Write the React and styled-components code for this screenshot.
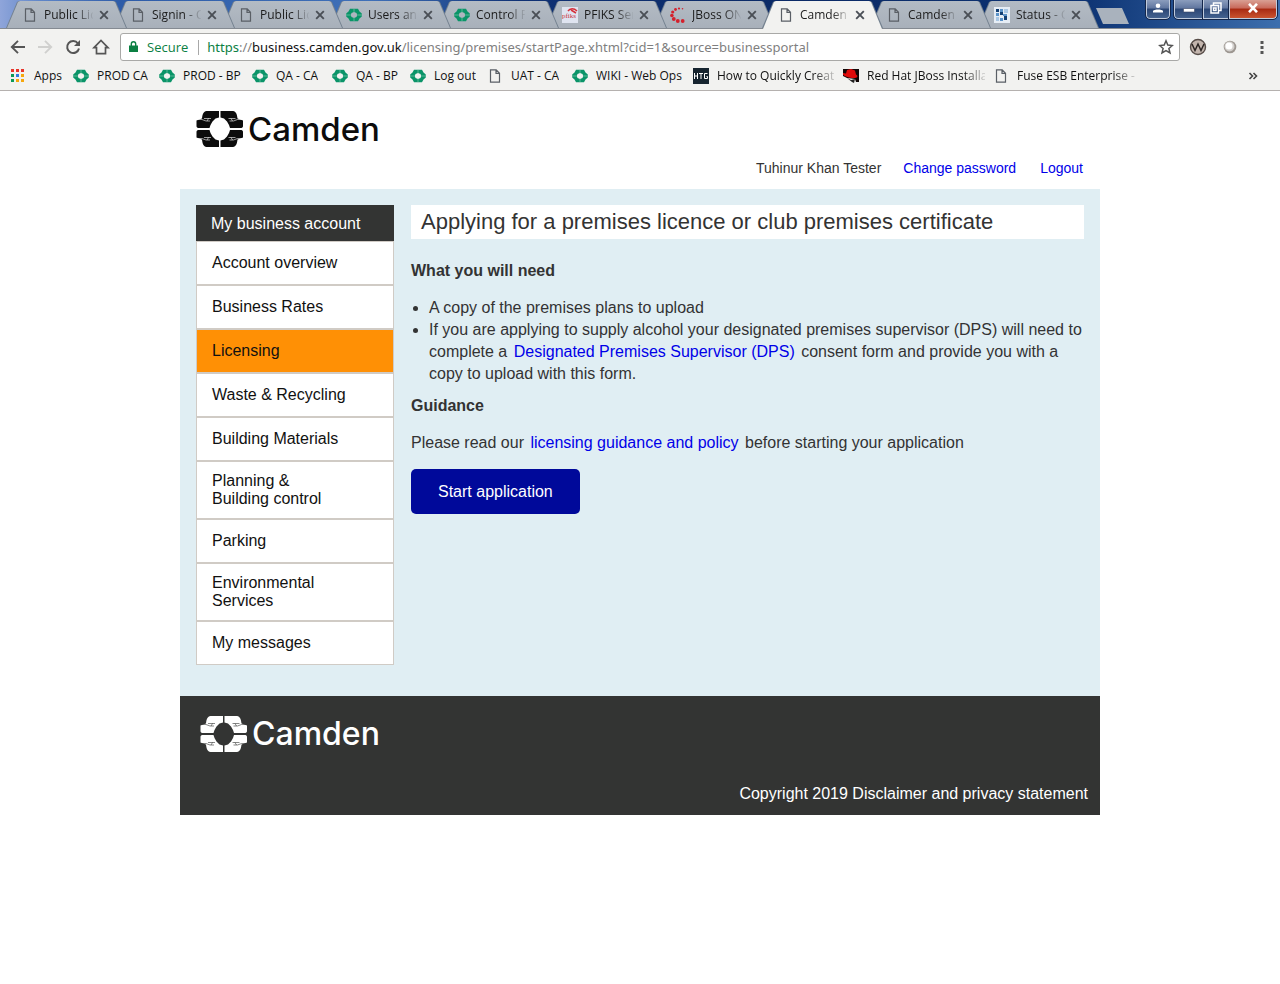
import React from "react";
import styled, { createGlobalStyle, css } from "styled-components";

const GlobalStyle = createGlobalStyle`
  * {
    box-sizing: border-box;
  }
  body {
    margin: 0;
    background: #fff;
    color: #333;
    font-family: "Liberation Sans", Arial, sans-serif;
    font-size: 16px;
    line-height: 22px;
  }
  button,
  input {
    font-family: inherit;
    margin: 0;
  }
`;

/* ---------- browser frame ---------- */

const Chrome = styled.header`
  font-family: "Open Sans", "Segoe UI", sans-serif;
  font-size: 12px;
  line-height: 16px;
  color: #111;
  background: #f2f2f0;
  border-bottom: 1px solid #b5b1af;
`;

const TabStrip = styled.div`
  display: flex;
  height: 29px;
  padding-left: 6px;
  border-bottom: 1px solid #848a92;
  background: linear-gradient(
    90deg,
    #8fa5da 0,
    #5f86c8 40px,
    #2e5ca8 120px,
    #3f70b8 370px,
    #0f3174 520px,
    #0b2a66 800px,
    #0c3272 1080px,
    #3d6fae 1280px
  );
`;

const TabBox = styled.div`
  position: relative;
  z-index: ${(props) => props.$level};
  display: flex;
  align-items: center;
  flex: 0 0 121px;
  height: 28px;
  margin-right: -13px;
  padding: 2px 16px 0;
  color: #1c1c1c;

  &::before,
  &::after {
    content: "";
    position: absolute;
    z-index: -1;
    inset: 0;
    clip-path: polygon(0 100%, 11px 2px, 13px 1px, 108px 1px, 110px 2px, 100% 100%);
    background: #73808f;
  }
  &::after {
    inset: 1px 1px 0;
    clip-path: polygon(0 100%, 11px 1px, 13px 0, 106px 0, 108px 1px, 100% 100%);
    background: linear-gradient(#b3bbc4, #a8b0ba);
    ${(props) =>
      props.$active &&
      css`
        bottom: -1px;
        background: #f2f2f0;
      `}
  }
`;

const TabTitle = styled.span`
  flex: 0 0 49px;
  margin: 0 6px;
  overflow: hidden;
  white-space: nowrap;
  mask-image: linear-gradient(90deg, #000 32px, transparent 50px);
`;

const IconButton = styled.button`
  display: flex;
  align-items: center;
  justify-content: center;
  flex: none;
  width: ${(props) => props.$size || 16}px;
  height: ${(props) => props.$size || 16}px;
  padding: 0;
  border: 0;
  background: none;
`;

const MoreButton = styled(IconButton)`
  margin-left: auto;
`;

const NewTab = styled.button`
  width: 33px;
  height: 16px;
  margin: 8px auto 0 10px;
  padding: 0;
  border: 0;
  background: #a9b2bd;
  clip-path: polygon(0 0, 26px 0, 100% 100%, 7px 100%);
`;

const WindowControls = styled.div`
  display: flex;
  height: 19px;
  margin-right: 3px;
`;

const WindowButton = styled.button`
  display: flex;
  align-items: center;
  justify-content: center;
  width: ${(props) => props.$width}px;
  margin-right: ${(props) => props.$gap || 0}px;
  padding: 0 0 2px;
  border: 1px solid #c0cbdc;
  border-top: 0;
  border-radius: ${(props) => props.$radius || "0"};
  outline: 1px solid #14264a;
  background: ${(props) =>
    props.$close
      ? "linear-gradient(#d9a094 0, #c8695a 45%, #a82a12 50%, #c9532f 100%)"
      : "linear-gradient(#8b9dbd 0, #60769f 45%, #2b4675 50%, #44628f 100%)"};
`;

const Toolbar = styled.div`
  display: flex;
  align-items: center;
  height: 36px;
  padding: 0 8px 0 9px;
  gap: 8px;
`;

const AddressBar = styled.form`
  display: flex;
  align-items: center;
  flex: 1;
  height: 28px;
  margin-left: 1px;
  padding: 0 5px 0 8px;
  border: 1px solid #a9a9a7;
  border-radius: 3px;
  background: #fff;
  font-size: 13px;
  line-height: 18px;
`;

const Secure = styled.span`
  margin-left: 9px;
  padding-right: 10px;
  border-right: 1px solid #a8a8a8;
  line-height: 15px;
  color: #0b8043;
`;

const Url = styled.span`
  flex: 1;
  margin-left: 8px;
  color: #7f7f7f;
  font-family: "Noto Sans", "Open Sans", sans-serif;
  white-space: nowrap;

  b {
    font-weight: 400;
    color: #111;
  }
  i {
    font-style: normal;
    color: #0b8043;
  }
`;

const Bookmarks = styled.nav`
  display: flex;
  align-items: center;
  height: 25px;
  padding: 0 19px 3px 10px;
`;

const Bookmark = styled.a`
  display: flex;
  align-items: center;
  flex: 0 0 ${(props) => props.$width}px;
  gap: 8px;
  color: #111;
  text-decoration: none;
  white-space: nowrap;

  span:last-child {
    max-width: 118px;
    overflow: hidden;
    ${(props) =>
      props.$fade &&
      css`
        mask-image: linear-gradient(90deg, #000 96px, transparent 122px);
      `}
  }
`;

const PageIcon = () => (
  <svg width="14" height="14" viewBox="0 0 14 14" fill="none" stroke="#5a5f66" strokeWidth="1.2">
    <path d="M2.5.8h5.700l3.300 3.400v9h-9zM8 .8v3.600h3.500" />
  </svg>
);

const CamdenIcon = () => (
  <svg width="16" height="14" viewBox="0 0 16 14">
    <path
      fill="#0a9468"
      fillRule="evenodd"
      d="M4 .800h8l1.500 2.700L15.800 5.500v3l-2.300 2-1.500 2.700H4l-1.500-2.700-2.300-2v-3l2.300-2zM8 4 5.500 5 4.800 7l.7 2 2.500 1 2.500-1 .7-2-.7-2z"
    />
    <path stroke="#8fcdb7" strokeWidth=".6" d="M8 .8V4M8 10v3.200M.2 7h4.600M11.200 7h4.600" />
  </svg>
);

const PfiksIcon = () => (
  <svg width="16" height="16" viewBox="0 0 16 16">
    <path fill="#dfe4f0" d="M0 0h16v16H0z" />
    <path fill="none" stroke="#d6303a" strokeWidth="1.500" d="M6 4c2-3 6-3 9 0M9 3l5 3" />
    <text x="0" y="11" fontSize="7" fontFamily="Liberation Serif, serif" fill="#c9323c">
      pfiks
    </text>
  </svg>
);

const JBossIcon = () => (
  <svg width="16" height="16" viewBox="0 0 16 16" fill="#d4202c">
    <circle cx="12.500" cy="1.800" r=".8" />
    <circle cx="9" cy="1.500" r="1.100" />
    <circle cx="5.500" cy="2.500" r="1.400" />
    <circle cx="2.700" cy="5" r="1.600" />
    <circle cx="1.900" cy="8.500" r="1.800" />
    <circle cx="3.800" cy="12" r="1.900" />
    <circle cx="7.800" cy="14" r="1.900" />
    <circle cx="12.700" cy="14" r="1.900" />
  </svg>
);

const StatusIcon = () => (
  <svg width="16" height="16" viewBox="0 0 16 16">
    <path fill="#e6edf5" d="M0 0h16v16H0z" />
    <path fill="#123f73" d="M2 2h3v3H2zM6 5h3v3H6zM10 9h3v4h-3z" />
    <path fill="#5b93c9" d="M6 2h3v3H6zM2 6h3v3H2zM9 7h4v2H9zM6 11h3v3H6z" />
    <path fill="#a9c7e4" d="M10 2h4v4h-4zM2 10h3v4H2z" />
  </svg>
);

const HatIcon = () => (
  <svg width="16" height="16" viewBox="0 0 16 16">
    <path fill="#100606" d="M0 1h16v13h-3l-1-3-8-1-4-2z" />
    <path fill="#e00b0b" d="M0 5c1 0 2 .5 3 .5L4 2l4-1 4 1.500 1 4c2 1 2 3-1 3.500-4 .5-10-1-12-3.500z" />
    <path fill="#222" d="m4 10 4 2 4-1-1 4-2-1z" />
  </svg>
);

const HtgIcon = () => (
  <svg width="16" height="16" viewBox="0 0 16 16">
    <path fill="#16242f" d="M0 0h16v16H0z" />
    <path fill="none" stroke="#fff" d="M1.500 5v6M4.500 5v6M2 8h2M6 5.500h4M8 5v6M14.500 5.500h-3v5h3v-2h-1" />
  </svg>
);

const AppsIcon = () => (
  <svg width="16" height="14" viewBox="0 0 16 14">
    <path fill="#e8352b" d="M1 0h3v3H1zM6 0h3v3H6zM11 0h3v3h-3z" />
    <path fill="#0b9a57" d="M1 5h3v3H1zM1 10h3v3H1z" />
    <path fill="#2f7de1" d="M6 5h3v3H6z" />
    <path fill="#f6a70c" d="M11 5h3v3h-3zM6 10h3v3H6zM11 10h3v3h-3z" />
  </svg>
);

const CloseIcon = () => (
  <svg width="10" height="10" viewBox="0 0 10 10" stroke="#4a4f56" strokeWidth="1.900">
    <path d="m1.200 1.200 7.600 7.600M8.800 1.200 1.200 8.800" />
  </svg>
);

const icons = {
  page: <PageIcon />,
  camden: <CamdenIcon />,
  pfiks: <PfiksIcon />,
  jboss: <JBossIcon />,
  status: <StatusIcon />,
  hat: <HatIcon />,
  htg: <HtgIcon />,
  apps: <AppsIcon />,
};

const IconSlot = styled.span`
  display: flex;
  justify-content: center;
  flex: 0 0 16px;
`;

const tabs = [
  { icon: "page", title: "Public Lice" },
  { icon: "page", title: "Signin - Ca" },
  { icon: "page", title: "Public Lice" },
  { icon: "camden", title: "Users and" },
  { icon: "camden", title: "Control Pa" },
  { icon: "pfiks", title: "PFIKS Serv" },
  { icon: "jboss", title: "JBoss ON" },
  { icon: "page", title: "Camden", active: true },
  { icon: "page", title: "Camden" },
  { icon: "status", title: "Status - C" },
];

const bookmarks = [
  { icon: "apps", title: "Apps", width: 63 },
  { icon: "camden", title: "PROD CA", width: 86 },
  { icon: "camden", title: "PROD - BP", width: 93 },
  { icon: "camden", title: "QA - CA", width: 80 },
  { icon: "camden", title: "QA - BP", width: 78 },
  { icon: "camden", title: "Log out", width: 77 },
  { icon: "page", title: "UAT - CA", width: 85 },
  { icon: "camden", title: "WIKI - Web Ops", width: 121 },
  { icon: "htg", title: "How to Quickly Creat", width: 150, fade: true },
  { icon: "hat", title: "Red Hat JBoss Installa", width: 150, fade: true },
  { icon: "page", title: "Fuse ESB Enterprise -", width: 150, fade: true },
];

const Browser = () => (
  <Chrome>
    <TabStrip>
      {tabs.map((tab, i) => (
        <TabBox key={i} $active={tab.active} $level={tab.active ? 20 : 10 - i}>
          <IconSlot>{icons[tab.icon]}</IconSlot>
          <TabTitle>{tab.title}</TabTitle>
          <IconButton $size={10} aria-label="Close tab">
            <CloseIcon />
          </IconButton>
        </TabBox>
      ))}
      <NewTab aria-label="New tab" />
      <WindowControls>
        <WindowButton $width={24} $gap={4} $radius="0 0 4px 4px" aria-label="Profile">
          <svg width="10" height="10" viewBox="0 0 10 10" fill="#fff">
            <circle cx="5" cy="2.800" r="2.300" />
            <path d="M0 9.500V8c1-2 9-2 10 0v1.500z" />
          </svg>
        </WindowButton>
        <WindowButton $width={29} $radius="0 0 0 4px" aria-label="Minimize">
          <svg width="12" height="12" viewBox="0 0 12 12">
            <path fill="#fff" stroke="#3a4766" strokeWidth=".6" d="M.5 6.500h11v3.500H.5z" />
          </svg>
        </WindowButton>
        <WindowButton $width={26} aria-label="Restore">
          <svg width="12" height="12" viewBox="0 0 12 12" fill="none" stroke="#fff" strokeWidth="1.500">
            <path d="M3.500 3V1h7.500v7.500H9M1 3.500h7.500V11H1zM3.500 6h2.500v2.500H3.500z" />
          </svg>
        </WindowButton>
        <WindowButton $width={48} $close $radius="0 0 4px 0" aria-label="Close">
          <svg width="12" height="10" viewBox="0 0 12 10" stroke="#fff" strokeWidth="2.600">
            <path d="m2 .8 8 8.400M10 .8 2 9.200" />
          </svg>
        </WindowButton>
      </WindowControls>
    </TabStrip>
    <Toolbar>
      <IconButton $size={18} aria-label="Back">
        <svg width="16" height="16" viewBox="0 0 16 16" fill="none" stroke="#555" strokeWidth="1.900">
          <path d="M15 8H2.500M8 1.800 1.800 8 8 14.200" />
        </svg>
      </IconButton>
      <IconButton $size={20} aria-label="Forward">
        <svg width="16" height="16" viewBox="0 0 16 16" fill="none" stroke="#d0d0ce" strokeWidth="1.900">
          <path d="M1 8h12.500M8 1.800 14.200 8 8 14.200" />
        </svg>
      </IconButton>
      <IconButton $size={20} aria-label="Reload">
        <svg width="16" height="16" viewBox="0 0 16 16">
          <path fill="none" stroke="#555" strokeWidth="2" d="M13 4.500A6 6 0 1 0 14 9.500" />
          <path fill="#555" d="M15 1v6H9z" />
        </svg>
      </IconButton>
      <IconButton $size={20} aria-label="Home">
        <svg width="18" height="16" viewBox="0 0 18 16" fill="none" stroke="#555" strokeWidth="1.700">
          <path d="M2 8.700 9 1.500l7 7.200h-2.500v6h-9v-6z" />
        </svg>
      </IconButton>
      <AddressBar>
        <svg width="9" height="12" viewBox="0 0 9 12">
          <path fill="#0b8043" d="M0 4.500h9V11H0z" />
          <path fill="none" stroke="#0b8043" strokeWidth="1.400" d="M2.300 5V3a2.200 2.200 0 0 1 4.400 0v2" />
        </svg>
        <Secure>Secure</Secure>
        <Url>
          <i>https</i>://<b>business.camden.gov.uk</b>
          /licensing/premises/startPage.xhtml?cid=1&amp;source=businessportal
        </Url>
        <IconButton aria-label="Bookmark this page">
          <svg width="16" height="16" viewBox="0 0 16 16" fill="none" stroke="#555" strokeWidth="1.500">
            <path d="m8 1.800 1.800 4.300 4.600.4-3.500 3 1.100 4.500L8 11.600 4 14l1.100-4.500-3.500-3 4.600-.4z" />
          </svg>
        </IconButton>
      </AddressBar>
      <IconButton $size={20} aria-label="Wappalyzer">
        <svg width="18" height="18" viewBox="0 0 18 18">
          <circle cx="9" cy="9" r="7.500" fill="#c3b5ad" stroke="#574d49" strokeWidth="1.400" />
          <path fill="none" stroke="#2c2624" strokeWidth="1.500" d="m3 6 3 6.500L9 6l3 6.500L15 6" />
        </svg>
      </IconButton>
      <IconButton $size={28} aria-label="Extension">
        <svg width="14" height="14" viewBox="0 0 14 14">
          <circle cx="7" cy="7" r="6.300" fill="#9d9791" />
          <circle cx="6.500" cy="6.500" r="5" fill="#d3d0cd" />
          <circle cx="6" cy="6" r="3.500" fill="#fff" />
        </svg>
      </IconButton>
      <IconButton $size={20} aria-label="Menu">
        <svg width="4" height="14" viewBox="0 0 4 14" fill="#555">
          <path d="M.5 1h3v3h-3zM.5 6h3v3h-3zM.5 11h3v3h-3z" />
        </svg>
      </IconButton>
    </Toolbar>
    <Bookmarks>
      {bookmarks.map((item, i) => (
        <Bookmark key={i} href="#" $width={item.width} $fade={item.fade}>
          <IconSlot>{icons[item.icon]}</IconSlot>
          <span>{item.title}</span>
        </Bookmark>
      ))}
      <MoreButton aria-label="More bookmarks">
        <svg width="10" height="8" viewBox="0 0 10 8" fill="none" stroke="#444" strokeWidth="1.600">
          <path d="m1.500 1 3 3-3 3M5.500 1l3 3-3 3" />
        </svg>
      </MoreButton>
    </Bookmarks>
  </Chrome>
);

/* ---------- page ---------- */

const Page = styled.div`
  max-width: 920px;
  margin: 0 auto;
`;

const Banner = styled.div`
  padding: 20px 16px 10px;
`;

const Brand = styled.a`
  display: flex;
  align-items: center;
  gap: 4px;
  width: max-content;
  height: 36px;
  color: ${(props) => props.$color};
  font-family: Inter, "Liberation Sans", sans-serif;
  font-size: ${(props) => props.$size}px;
  font-weight: 500;
  line-height: 36px;
  text-decoration: none;
`;

const UserLinks = styled.div`
  display: flex;
  justify-content: flex-end;
  margin-top: 10px;
  font-size: 14px;

  a {
    margin-left: 22px;
  }
  a:last-child {
    margin: 0 1px 0 24px;
  }
`;

const Link = styled.a`
  color: #0000e8;
  text-decoration: none;
`;

const Columns = styled.div`
  display: flex;
  align-items: flex-start;
  gap: 17px;
  padding: 16px 16px 31px;
  background: #e0eef3;
`;

const Sidebar = styled.nav`
  flex: 0 0 198px;
`;

const SidebarTitle = styled.h2`
  margin: 0;
  padding: 8px 15px 6px;
  background: #333433;
  color: #fff;
  font-size: 16px;
  font-weight: 400;
  line-height: 22px;
`;

const SidebarLink = styled.a`
  display: flex;
  align-items: center;
  min-height: 44px;
  padding: 10px 44px 10px 15px;
  border: 1px solid #d0cbc5;
  background: ${(props) => (props.$active ? "#ff9005" : "#fff")};
  color: #111;
  line-height: 18px;
  text-decoration: none;
`;

const Content = styled.main`
  flex: 1;
`;

const Title = styled.h1`
  margin: 0 0 21px;
  padding: 4px 10px;
  background: #fff;
  font-size: 22px;
  font-weight: 400;
  line-height: 26px;
`;

const SubTitle = styled.h3`
  margin: 0 0 15px;
  font-size: 16px;
  line-height: 22px;
`;

const List = styled.ul`
  margin: 0 0 10px;
  padding-left: 18px;
`;

const Paragraph = styled.p`
  margin: 0 0 15px;
`;

const InlineLink = styled(Link)`
  margin: 0 2px;
`;

const StartButton = styled.button`
  display: block;
  height: 45px;
  padding: 0 27px;
  border: 0;
  border-radius: 5px;
  background: #00099a;
  color: #fff;
  font-size: 16px;
`;

const Footer = styled.footer`
  padding: 20px 12px 10px 20px;
  background: #333433;
  color: #fff;
`;

const Copyright = styled.p`
  margin: 31px 0 0;
  text-align: right;

  a {
    color: inherit;
    text-decoration: none;
  }
`;

/* four pairs of clasped hands around an open centre */
const CamdenMark = ({ color, back }) => (
  <svg width="48" height="36" viewBox="0 0 48 36">
    {[0, 1, 2, 3].map((i) => {
      const left = i % 2 === 0;
      const top = i < 2;
      return (
        <g key={i} transform={`translate(${left ? 0 : 24.5} ${top ? 0 : 19})`}>
          <path
            fill={color}
            transform={`matrix(${left ? 1 : -1} 0 0 ${top ? 1 : -1} ${left ? 0 : 23} ${top ? 0 : 17})`}
            d="M10.500 0H23v6.500l-3.500 1-3 3L14.500 14l-1 3H3c-1.500 0-2.500-.5-2.500-2V9.500L6 7.500C6.500 3 7.500 .5 10.500 0z"
          />
          <path
            fill="none"
            stroke={back}
            strokeWidth=".7"
            opacity=".85"
            d={left ? "M1 8.500h5l4 1.500h4M8 7.500h7M12.500 7.500 11 10" : "M22 8.500h-5l-4 1.500H9M15 7.500H8M10.500 7.500 12 10"}
          />
        </g>
      );
    })}
  </svg>
);

const menu = [
  "Account overview",
  "Business Rates",
  "Licensing",
  "Waste & Recycling",
  "Building Materials",
  "Planning & Building control",
  "Parking",
  "Environmental Services",
  "My messages",
];

const App = () => {
  return (
    <>
      <GlobalStyle />
      <Browser />
      <Page>
        <Banner>
          <Brand href="#" $color="#0c0c0c" $size={33}>
            <CamdenMark color="#0c0c0c" back="#fff" />
            Camden
          </Brand>
          <UserLinks>
            <span>Tuhinur Khan Tester</span>
            <Link href="#">Change password</Link>
            <Link href="#">Logout</Link>
          </UserLinks>
        </Banner>
        <Columns>
          <Sidebar>
            <SidebarTitle>My business account</SidebarTitle>
            {menu.map((item) => (
              <SidebarLink key={item} href="#" $active={item === "Licensing"}>
                {item}
              </SidebarLink>
            ))}
          </Sidebar>
          <Content>
            <Title>Applying for a premises licence or club premises certificate</Title>
            <SubTitle>What you will need</SubTitle>
            <List>
              <li>A copy of the premises plans to upload</li>
              <li>
                If you are applying to supply alcohol your designated premises supervisor (DPS) will need to
                complete a <InlineLink href="#">Designated Premises Supervisor (DPS)</InlineLink> consent form
                and provide you with a copy to upload with this form.
              </li>
            </List>
            <SubTitle>Guidance</SubTitle>
            <Paragraph>
              Please read our <InlineLink href="#">licensing guidance and policy</InlineLink> before starting
              your application
            </Paragraph>
            <StartButton>Start application</StartButton>
          </Content>
        </Columns>
        <Footer>
          <Brand href="#" $color="#fff" $size={32}>
            <CamdenMark color="#fff" back="#333433" />
            Camden
          </Brand>
          <Copyright>
            Copyright 2019 <a href="#">Disclaimer and privacy statement</a>
          </Copyright>
        </Footer>
      </Page>
    </>
  );
};

export default App;
